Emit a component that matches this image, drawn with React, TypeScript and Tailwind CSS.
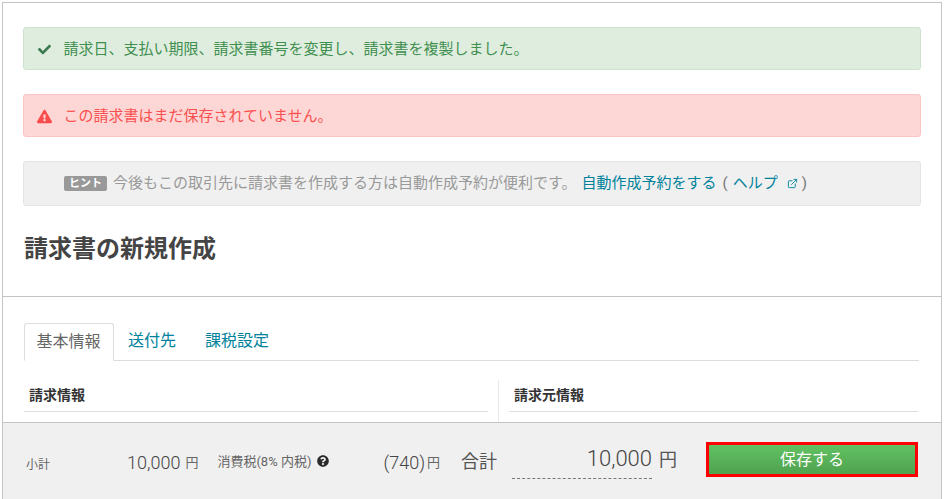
import React from "react";
import { FaCheck, FaExclamationTriangle, FaQuestionCircle } from "react-icons/fa";
import { ExternalLink } from "lucide-react";

function Alert({
  className,
  children,
}: {
  className: string;
  children: React.ReactNode;
}) {
  return (
    <div className={["flex items-center border rounded-[3px] h-[43px]", className].join(" ")}>
      {children}
    </div>
  );
}

function SectionHead({ title, className }: { title: string; className: string }) {
  return (
    <div className={["border-b border-[#ddd] h-[32px] pl-[5px] pt-[5px] text-[14px] leading-[20px] font-bold text-[#333]", className].join(" ")}>
      {title}
    </div>
  );
}

export default function App() {
  return (
    <div
      className="w-[944px] h-[499px] overflow-hidden bg-white px-[2px] pt-[2px] flex flex-col text-[#555]"
      style={{ fontFamily: 'Roboto, "Noto Sans CJK JP", sans-serif' }}
    >
      <div className="flex-1 flex flex-col border-x border-t border-[#c4c4c4] min-h-0">
        <div className="px-[20px] pt-[24px] h-[294px] border-b border-[#c4c4c4]">
          <Alert className="bg-[#dfeddf] border-[#cde3cd] text-[#3f8f4f] mb-[24px] pt-[2px]">
            <FaCheck className="ml-[14px] mr-[12px] w-[13px] h-[13px] text-[#3c7a50]" />
            <span className="text-[15px] ml-[0.5px]">請求日、支払い期限、請求書番号を変更し、請求書を複製しました。</span>
          </Alert>
          <Alert className="bg-[#fdd7d5] border-[#fcc4c2] text-[#f9504f] mb-[24px] pt-[2px]">
            <FaExclamationTriangle className="ml-[13px] mr-[11px] w-[15px] h-[15px] text-[#fa4c4c]" />
            <span className="text-[15px] ml-[0.5px]">この請求書はまだ保存されていません。</span>
          </Alert>
          <Alert className="bg-[#f0f0f0] border-[#e4e4e4] h-[45px] text-[#999] pl-[40px]">
            <span className="bg-[#999] text-white text-[11px] font-bold rounded-[2px] w-[43px] h-[15px] leading-[15px] text-center mr-[6px]">ヒント</span>
            <span className="text-[15px]">今後もこの取引先に請求書を作成する方は自動作成予約が便利です。</span>
            <span className="text-[15px] text-[#00829b] ml-[5px]">自動作成予約をする</span>
            <span className="text-[15px] text-[#777] ml-[6px]">(</span>
            <span className="text-[15px] text-[#00829b] ml-[5px]">ヘルプ</span>
            <ExternalLink className="w-[11px] h-[11px] text-[#00829b] ml-[9px] mr-[4px]" />
            <span className="text-[15px] text-[#777]">)</span>
          </Alert>
          <h1 className="mt-[28px] text-[24px] leading-[30px] font-bold text-[#444] pl-px">請求書の新規作成</h1>
        </div>

        <div className="h-[126px] border-b border-[#c4c4c4] pl-[21px] pr-[22px] pt-[26px] overflow-hidden">
          <div className="flex h-[38px] border-b border-[#ddd] text-[16px]">
            <div className="w-[90px] h-[38px] bg-white border border-[#ddd] border-b-white rounded-t-[3px] flex items-center justify-center text-[#666] pr-px">基本情報</div>
            <div className="ml-[14px] leading-[36px] text-[#00829b]">送付先</div>
            <div className="ml-[29px] leading-[36px] text-[#00829b]">課税設定</div>
          </div>
          <div className="flex mt-[19px] h-[42px]">
            <SectionHead title="請求情報" className="w-[464px]" />
            <div className="ml-[10px] w-px bg-[#e8e8e8]" />
            <SectionHead title="請求元情報" className="ml-[10px] w-[409px]" />
          </div>
        </div>

        <div className="flex-1 bg-[#f0f0f0] flex items-center pl-[23px]">
          <span className="text-[12px] w-[101px] text-[#666] mt-[8px]">小計</span>
          <span className="text-[18px] font-light text-[#444] mt-[2px]">10,000</span>
          <span className="text-[13px] ml-[5px] text-[#666] mt-[4px]">円</span>
          <span className="text-[13px] ml-[19px] text-[#666] mt-[2px]">消費税(8% 内税)</span>
          <FaQuestionCircle className="ml-[6px] w-[12px] h-[12px] text-[#2b2b2b]" />
          <span className="text-[18px] font-light text-[#444] ml-[54px] mt-[2px]">(740)</span>
          <span className="text-[13px] ml-[2px] text-[#666] mt-[4px]">円</span>
          <span className="text-[18px] ml-[21px] text-[#555]">合計</span>
          <div className="ml-[15px] w-[140px] h-[34px] mt-[2px] border-b border-dashed border-[#777] text-right text-[22px] font-light leading-[28px] text-[#444]">10,000</div>
          <span className="text-[18px] ml-[7px] text-[#555] -mt-[3px]">円</span>
          <button className="ml-[29px] w-[212px] h-[35px] border-[3px] border-[#ff0000] bg-linear-to-b from-[#62c162] to-[#4fa34f] text-white text-[16px] flex items-center justify-center -mt-[3px]">保存する</button>
        </div>
      </div>
    </div>
  );
}
